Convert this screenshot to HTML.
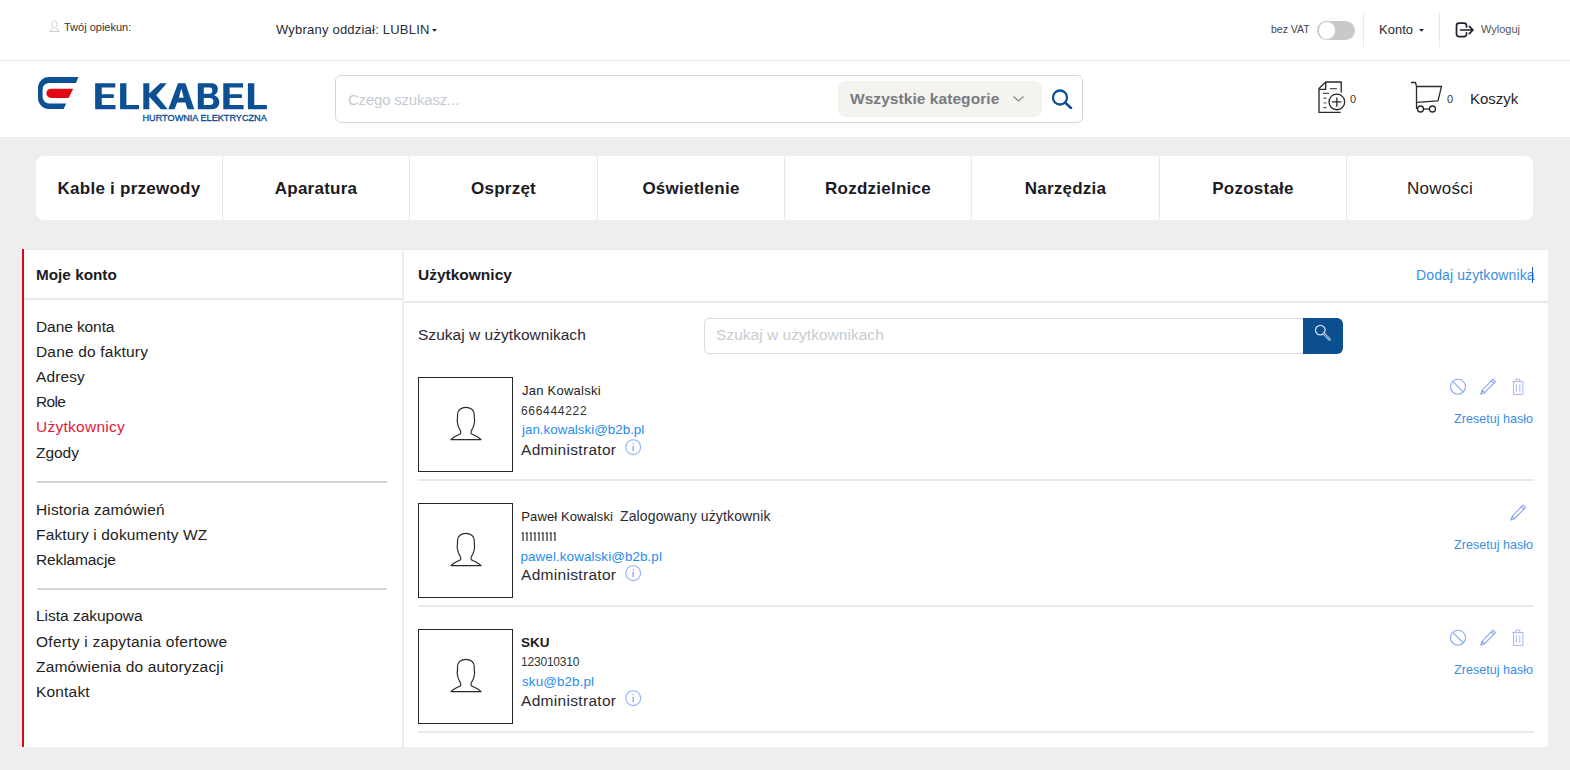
<!DOCTYPE html>
<html><head><meta charset="utf-8">
<style>
*{box-sizing:border-box;margin:0;padding:0}
html,body{width:1570px;height:770px;overflow:hidden;background:#eeeeee;font-family:"Liberation Sans",sans-serif;color:#212121}
.a{position:absolute;white-space:nowrap;line-height:1}
#top{position:absolute;left:0;top:0;width:1570px;height:61px;background:#fff;border-bottom:1px solid #e4e6ea}
#hdr{position:absolute;left:0;top:61px;width:1570px;height:76px;background:#fff}
#nav{position:absolute;left:36px;top:156px;width:1497px;height:64px;background:#fff;border-radius:8px}
#nav .it{position:absolute;top:0.5px;height:64px;font-size:17px;font-weight:700;color:#1b1b24;text-align:center;line-height:64px;letter-spacing:0.25px}
#side{position:absolute;left:22px;top:249px;width:380px;height:498px;background:#fff;border-left:2px solid #e30613;box-shadow:inset 0 1px 0 #e3e6ea}
#main{position:absolute;left:404px;top:249px;width:1144px;height:498px;background:#fff;box-shadow:inset 0 1px 0 #e3e6ea}
.sl{position:absolute;left:12px;font-size:15px;color:#222;line-height:1}
.hr{position:absolute;height:2px;background:#e5e8ed}
.blue{color:#2f8be6}
.m{position:absolute;white-space:nowrap;line-height:1}
</style></head><body>

<!-- TOP BAR -->
<div id="top">
  <svg class="a" style="left:49px;top:20px" width="11" height="12" viewBox="0 0 11 12"><path d="M5.5 1 C3.5 1 2.8 2.6 3 4.3 C3.1 5.6 3.8 6.6 4.3 7.3 L4.2 8.4 L1 10.6 L0.8 11.5 H10.2 L10 10.6 L6.8 8.4 L6.7 7.3 C7.2 6.6 7.9 5.6 8 4.3 C8.2 2.6 7.5 1 5.5 1Z" fill="none" stroke="#c9c9c9" stroke-width="0.9"/></svg>
  <div class="a" style="left:64px;top:22px;font-size:11px;color:#333">Twój opiekun:</div>
  <div class="a" style="left:276px;top:23px;font-size:13px;color:#2a2a33;letter-spacing:0.21px">Wybrany oddział: LUBLIN</div>
  <svg class="a" style="left:432px;top:28.5px" width="5" height="3" viewBox="0 0 5 3"><path d="M0 0 H5 L2.5 2.8Z" fill="#222"/></svg>

  <div class="a" style="left:1271px;top:24px;font-size:10.5px;color:#444">bez VAT</div>
  <div class="a" style="left:1317px;top:21px;width:38px;height:19px;border-radius:10px;background:#c9c9c9"></div>
  <div class="a" style="left:1318.8px;top:22.3px;width:16.5px;height:16.5px;border-radius:50%;background:#fff"></div>
  <div class="a" style="left:1363px;top:13px;width:1px;height:34px;background:#e6e8ee"></div>
  <div class="a" style="left:1379px;top:23px;font-size:13px;color:#2a2a33">Konto</div>
  <svg class="a" style="left:1419px;top:28.5px" width="5" height="3" viewBox="0 0 5 3"><path d="M0 0 H5 L2.5 2.8Z" fill="#222"/></svg>
  <div class="a" style="left:1439px;top:13px;width:1px;height:34px;background:#e6e8ee"></div>
  <svg class="a" style="left:1454px;top:21px" width="22" height="18" viewBox="0 0 22 18"><path d="M12.5,6 V4.7 A2.5,2.5 0 0 0 10,2.2 H5 A2.5,2.5 0 0 0 2.5,4.7 V13.2 A2.5,2.5 0 0 0 5,15.7 H10 A2.5,2.5 0 0 0 12.5,13.2 V11.8 M6.6,9 H18.6 M15.3,5.3 L19,9 L15.3,12.6" fill="none" stroke="#1f2030" stroke-width="1.7" stroke-linecap="round" stroke-linejoin="round"/></svg>
  <div class="a" style="left:1481px;top:24px;font-size:11px;color:#555">Wyloguj</div>
</div>

<!-- HEADER -->
<div id="hdr">
  <svg class="a" style="left:0;top:-61px" width="280" height="140" viewBox="0 0 280 140">
    <path d="M78.5,77 H49 A11,11 0 0 0 38,88 V98 A11,11 0 0 0 49,109 H63.6 L66.2,103.4 H49 A6.4,6.4 0 0 1 42.6,97 V89.3 A6.4,6.4 0 0 1 49,82.9 H75.9 Z" fill="#0c4f93"/>
    <path d="M73.2,88.7 H51 A4.65,4.65 0 0 0 46.4,93.35 A4.65,4.65 0 0 0 51,98 H68.6 Z" fill="#e30613"/>
    <path fill="#0c4f93" fill-rule="evenodd" d="M95.15,83.2 H115.3 V87.5 H101.75 V94.3 H113.8 V98.1 H101.75 V104.9 H115.5 V109.25 H95.15 Z
      M120.1,83.2 H126.4 V104.9 H139 V109.25 H120.1 Z
      M143.3,83.2 H149.3 V93.6 L160.2,83.2 H166.7 L156.3,95.3 L167.7,109.25 H160.8 L149.3,96.8 V109.25 H143.3 Z
      M168.3,109.25 L178,83.2 H185.4 L194.3,109.25 H187.6 L185.3,102.4 H177.2 L174.6,109.25 Z M178.9,97.8 H183.7 L181.3,88.5 Z
      M197.8,83.2 H211 C216,83.2 217.8,85.8 217.8,89.3 C217.8,92.3 216.3,94.3 214,95.2 C217.3,96 219.3,98.5 219.3,102 C219.3,106.5 216.5,109.25 211.5,109.25 H197.8 Z
      M203.8,87.5 V93.8 H209.5 C211.5,93.8 212.3,92.5 212.3,90.6 C212.3,88.7 211.5,87.5 209.5,87.5 Z
      M203.8,98.1 V105 H210 C212.3,105 213.4,103.7 213.4,101.5 C213.4,99.4 212.3,98.1 210,98.1 Z
      M223.3,83.2 H243.1 V87.5 H229.6 V94.3 H241.9 V98.1 H229.6 V104.9 H243.6 V109.25 H223.3 Z
      M247.9,83.2 H254.3 V104.9 H266.9 V109.25 H247.9 Z"/>
    <text x="142.5" y="121.2" font-family="Liberation Sans" font-weight="400" font-size="9.3" fill="#0c4f93" stroke="#0c4f93" stroke-width="0.35" textLength="124.3" lengthAdjust="spacingAndGlyphs">HURTOWNIA ELEKTRYCZNA</text>
  </svg>
  <div class="a" style="left:335px;top:14px;width:748px;height:48px;border:1.5px solid #d3d8df;border-radius:6px"></div>
  <div class="a" style="left:348px;top:31px;font-size:15px;color:#c5cad2;letter-spacing:-0.21px">Czego szukasz...</div>
  <div class="a" style="left:838px;top:20px;width:204px;height:36px;background:#f4f3f0;border-radius:7px"></div>
  <div class="a" style="left:850px;top:29.78px;font-size:15.5px;font-weight:700;color:#777b80;letter-spacing:0.06px">Wszystkie kategorie</div>
  <svg class="a" style="left:1012px;top:34px" width="13" height="8" viewBox="0 0 13 8"><path d="M1.5 1.5 L6.5 6 L11.5 1.5" fill="none" stroke="#8a8a8a" stroke-width="1.3"/></svg>
  <svg class="a" style="left:1051px;top:28px" width="22" height="20" viewBox="0 0 22 20"><circle cx="9" cy="8.5" r="7" fill="none" stroke="#0c4f93" stroke-width="2.3"/><path d="M14 13.5 L20 19" stroke="#0c4f93" stroke-width="2.5" stroke-linecap="round"/></svg>

  <!-- quote icon -->
  <svg class="a" style="left:1316px;top:19px" width="34" height="36" viewBox="0 0 34 36">
    <path d="M9.7,2 H25.2 V12.5 M3,8.4 L9.7,2 V9.3 H3 M3,8.4 V32.4 H24.6" fill="none" stroke="#2a2a2a" stroke-width="1.35" stroke-linejoin="round"/>
    <path d="M13.8,8.6 H20.9 M7,13.4 H13 M7.4,18.1 H10.6 M7.4,23 H10.6 M7.4,27.7 H10.6" stroke="#555" stroke-width="1.2"/>
    <circle cx="20.85" cy="21.9" r="7.8" fill="#fff" stroke="#2a2a2a" stroke-width="1.35"/>
    <path d="M20.85,17.5 V26.85 M15.9,21.9 H25.5" stroke="#2a2a2a" stroke-width="1.3"/>
  </svg>
  <div class="a" style="left:1350px;top:33px;font-size:11px;color:#333">0</div>
  <!-- cart -->
  <svg class="a" style="left:1410px;top:20px" width="34" height="33" viewBox="0 0 34 33">
    <path d="M1 1.5 H5.5 L6.5 5.5 V28 M6.5 5.5 H31.5 L28 20 L7 21.3" fill="none" stroke="#2a2a2a" stroke-width="1.3"/>
    <circle cx="10.5" cy="28" r="3" fill="#fff" stroke="#2a2a2a" stroke-width="1.3"/>
    <circle cx="22.5" cy="28" r="3" fill="#fff" stroke="#2a2a2a" stroke-width="1.3"/>
    <path d="M13.5 28 H19.5" stroke="#2a2a2a" stroke-width="1.3"/>
  </svg>
  <div class="a" style="left:1447px;top:33px;font-size:11px;color:#333">0</div>
  <div class="a" style="left:1470px;top:30px;font-size:15px;color:#1f1f2a">Koszyk</div>
</div>

<!-- NAV -->
<div id="nav">
  <div class="it" style="left:0px;width:186px">Kable i przewody</div>
  <div class="it" style="left:187px;width:186px">Aparatura</div>
  <div class="it" style="left:374px;width:187px">Osprzęt</div>
  <div class="it" style="left:562px;width:186px">Oświetlenie</div>
  <div class="it" style="left:749px;width:186px">Rozdzielnice</div>
  <div class="it" style="left:936px;width:187px">Narzędzia</div>
  <div class="it" style="left:1124px;width:186px">Pozostałe</div>
  <div class="it" style="left:1311px;width:186px;font-weight:400">Nowości</div>
  <div style="position:absolute;left:186px;top:0;width:1px;height:64px;background:#e9e9e9"></div>
  <div style="position:absolute;left:373px;top:0;width:1px;height:64px;background:#e9e9e9"></div>
  <div style="position:absolute;left:561px;top:0;width:1px;height:64px;background:#e9e9e9"></div>
  <div style="position:absolute;left:748px;top:0;width:1px;height:64px;background:#e9e9e9"></div>
  <div style="position:absolute;left:935px;top:0;width:1px;height:64px;background:#e9e9e9"></div>
  <div style="position:absolute;left:1123px;top:0;width:1px;height:64px;background:#e9e9e9"></div>
  <div style="position:absolute;left:1310px;top:0;width:1px;height:64px;background:#e9e9e9"></div>
</div>

<!-- SIDEBAR -->
<div id="side">
  <div class="sl" style="top:17.55px;font-size:15.3px;letter-spacing:0.01px;font-weight:700;color:#1b1b24">Moje konto</div>
  <div class="hr" style="left:0;top:49px;width:378px"></div>
  <div class="sl" style="top:69.68px;font-size:15.5px;letter-spacing:-0.09px">Dane konta</div>
  <div class="sl" style="top:94.88px;font-size:15.5px;letter-spacing:0.18px">Dane do faktury</div>
  <div class="sl" style="top:120.08px;font-size:15.5px;letter-spacing:0.12px">Adresy</div>
  <div class="sl" style="top:145.28px;font-size:15.5px;letter-spacing:-0.7px">Role</div>
  <div class="sl" style="top:170.48px;font-size:15.5px;letter-spacing:0.26px;color:#e3173a">Użytkownicy</div>
  <div class="sl" style="top:195.68px;font-size:15.5px;letter-spacing:-0.03px">Zgody</div>
  <div class="hr" style="left:13px;top:232px;width:350px;height:2px;background:#d4d4d4"></div>
  <div class="sl" style="top:252.78px;font-size:15.5px;letter-spacing:0.12px">Historia zamówień</div>
  <div class="sl" style="top:277.98px;font-size:15.5px;letter-spacing:0.16px">Faktury i dokumenty WZ</div>
  <div class="sl" style="top:303.18px;font-size:15.5px;letter-spacing:-0.12px">Reklamacje</div>
  <div class="hr" style="left:13px;top:339px;width:350px;height:2px;background:#d4d4d4"></div>
  <div class="sl" style="top:359.48px;font-size:15.5px;letter-spacing:-0.02px">Lista zakupowa</div>
  <div class="sl" style="top:384.68px;font-size:15.5px;letter-spacing:0.26px">Oferty i zapytania ofertowe</div>
  <div class="sl" style="top:409.88px;font-size:15.5px;letter-spacing:0.16px">Zamówienia do autoryzacji</div>
  <div class="sl" style="top:435.08px;font-size:15.5px;letter-spacing:0.18px">Kontakt</div>
</div>

<!-- MAIN -->
<div id="main">
  <div class="m" style="left:14px;top:18.48px;font-size:15.5px;font-weight:700;color:#1b1b24">Użytkownicy</div>
  <div class="m blue" style="left:1012px;top:18.5px;font-size:14px;color:#3a8ee6;letter-spacing:0.12px">Dodaj użytkownika</div>
  <div class="m" style="left:1128px;top:17.5px;width:1px;height:16px;background:#1a5fd0"></div>
  <div class="hr" style="left:0;top:52px;width:1144px"></div>
  <div class="m" style="left:14px;top:77.78px;font-size:15.5px;color:#2a2a33;letter-spacing:0.03px">Szukaj w użytkownikach</div>
  <div class="m" style="left:300px;top:69px;width:603px;height:36px;border:1.5px solid #d6dbe2;border-radius:5px 0 0 5px"></div>
  <div class="m" style="left:312px;top:78.38px;font-size:15.5px;color:#c7ccd3;letter-spacing:0.03px">Szukaj w użytkownikach</div>
  <div class="m" style="left:899px;top:69px;width:40px;height:36px;background:#0b4f8f;border-radius:0 6px 6px 0"></div>
  <svg class="m" style="left:909px;top:75px" width="20" height="20" viewBox="0 0 20 20"><circle cx="7.3" cy="6.1" r="4.8" fill="none" stroke="#cfdceb" stroke-width="1.3"/><path d="M10.8 9.6 L16.5 15.3" stroke="#cfdceb" stroke-width="2.6" stroke-linecap="round"/><path d="M10.8 9.6 L16.5 15.3" stroke="#0b4f8f" stroke-width="1" stroke-linecap="round"/></svg>

  <!-- row 1 -->
  <div class="m" style="left:14px;top:128px;width:95px;height:95px;border:1.6px solid #262626"></div>
  <svg class="m" style="left:36px;top:151px" width="50" height="45" viewBox="0 0 50 45"><path d="M11,39.6 C13,37 18,35.2 20.5,33.8 C21,32.8 20.8,31.3 20.2,30.3 C18.5,27.8 17.5,25 17.3,22 C17,21 17.3,19.5 17.5,18 L17.55,14.2 A8.35,6.9 0 0 1 34.25,14.2 L34.3,18 C34.5,19.5 34.8,21 34.5,22 C34.3,25 33.3,27.8 31.6,30.3 C31,31.3 30.8,32.8 31.3,33.8 C33.8,35.2 38.8,37 41,39.6 Z" fill="none" stroke="#2b2b2b" stroke-width="1.2" stroke-linejoin="round"/></svg>
  <div class="m" style="left:118px;top:135px;font-size:13px;color:#222;letter-spacing:0.25px">Jan Kowalski</div>
  <div class="m" style="left:117px;top:155.8px;font-size:12px;color:#333;letter-spacing:0.7px">666444222</div>
  <div class="m" style="left:118px;top:174.2px;font-size:13.4px;color:#1f8cf0">jan.kowalski@b2b.pl</div>
  <div class="m" style="left:117px;top:192.98px;font-size:15.5px;color:#2a2a33;letter-spacing:0.31px">Administrator</div>
  <svg class="m" style="left:221px;top:190px" width="17" height="17" viewBox="0 0 17 17"><circle cx="8.2" cy="8.2" r="7.4" fill="none" stroke="#8fb0f4" stroke-width="1.1"/><path d="M8.2 6.8 V12" stroke="#8fb0f4" stroke-width="1.5"/><path d="M8.2 4.1 V5.6" stroke="#aac2f6" stroke-width="1.5"/></svg>
  <div class="hr" style="left:14px;top:230px;width:1116px;background:#e8e9ed"></div>
  <svg class="m" style="left:1045px;top:128.8px" width="18" height="18" viewBox="0 0 18 18"><circle cx="9" cy="8.7" r="7.5" fill="none" stroke="#8eaaf3" stroke-width="1.1"/><path d="M3.7 3.4 L14.3 14" stroke="#8eaaf3" stroke-width="1.1"/></svg>
  <svg class="m" style="left:1076px;top:127.8px" width="18" height="19" viewBox="0 -1 18 19"><path transform="translate(0.8,16.1) scale(0.92) translate(-0.8,-16.1)" d="M0.8,16.1 L2.24,11.92 L14.04,-0.13 L16.76,2.53 L4.96,14.58 Z M2.24,11.92 L4.96,14.58 M12.29,1.65 L15.01,4.31" fill="none" stroke="#7e9ef0" stroke-width="1.1" stroke-linejoin="round"/></svg>
  <svg class="m" style="left:1108px;top:128.8px" width="13" height="18" viewBox="0 0 13 18"><path d="M1.5,4.1 V16.4 H10.9 V4.1 M0.3,3.6 H11.5 M3.8,3.6 V1.2 H7.8 V3.6 M4.3,6.3 V13.7 M7.8,6.3 V13.7" fill="none" stroke="#a9b6f2" stroke-width="1"/></svg>
  <div class="m" style="left:1050px;top:163.7px;font-size:12.6px;color:#3a8ee6">Zresetuj hasło</div>
  <!-- row 2 -->
  <div class="m" style="left:14px;top:254px;width:95px;height:95px;border:1.6px solid #262626"></div>
  <svg class="m" style="left:36px;top:277px" width="50" height="45" viewBox="0 0 50 45"><path d="M11,39.6 C13,37 18,35.2 20.5,33.8 C21,32.8 20.8,31.3 20.2,30.3 C18.5,27.8 17.5,25 17.3,22 C17,21 17.3,19.5 17.5,18 L17.55,14.2 A8.35,6.9 0 0 1 34.25,14.2 L34.3,18 C34.5,19.5 34.8,21 34.5,22 C34.3,25 33.3,27.8 31.6,30.3 C31,31.3 30.8,32.8 31.3,33.8 C33.8,35.2 38.8,37 41,39.6 Z" fill="none" stroke="#2b2b2b" stroke-width="1.2" stroke-linejoin="round"/></svg>
  <div class="m" style="left:117.3px;top:261px;font-size:13px;color:#222;letter-spacing:0.1px">Paweł Kowalski</div>
  <div class="m" style="left:216px;top:260px;font-size:14px;color:#2a2a33;letter-spacing:0.13px">Zalogowany użytkownik</div>
  <svg class="m" style="left:0;top:0" width="200" height="300"><path d="M119.0,283.2 V292.0 M117.7,284.6 L119.0,283.4 M123.0,283.2 V292.0 M121.7,284.6 L123.0,283.4 M127.0,283.2 V292.0 M125.7,284.6 L127.0,283.4 M131.0,283.2 V292.0 M129.7,284.6 L131.0,283.4 M135.0,283.2 V292.0 M133.7,284.6 L135.0,283.4 M139.0,283.2 V292.0 M137.7,284.6 L139.0,283.4 M143.0,283.2 V292.0 M141.7,284.6 L143.0,283.4 M147.0,283.2 V292.0 M145.7,284.6 L147.0,283.4 M151.0,283.2 V292.0 M149.7,284.6 L151.0,283.4" fill="none" stroke="#333" stroke-width="1.25"/></svg>
  <div class="m" style="left:116.5px;top:300.6px;font-size:13.4px;color:#1f8cf0;letter-spacing:0.1px">pawel.kowalski@b2b.pl</div>
  <div class="m" style="left:117px;top:318.48px;font-size:15.5px;color:#2a2a33;letter-spacing:0.31px">Administrator</div>
  <svg class="m" style="left:221px;top:316px" width="17" height="17" viewBox="0 0 17 17"><circle cx="8.2" cy="8.2" r="7.4" fill="none" stroke="#8fb0f4" stroke-width="1.1"/><path d="M8.2 6.8 V12" stroke="#8fb0f4" stroke-width="1.5"/><path d="M8.2 4.1 V5.6" stroke="#aac2f6" stroke-width="1.5"/></svg>
  <div class="hr" style="left:14px;top:356px;width:1116px;background:#e8e9ed"></div>
  <svg class="m" style="left:1106px;top:253.8px" width="18" height="19" viewBox="0 -1 18 19"><path transform="translate(0.8,16.1) scale(0.92) translate(-0.8,-16.1)" d="M0.8,16.1 L2.24,11.92 L14.04,-0.13 L16.76,2.53 L4.96,14.58 Z M2.24,11.92 L4.96,14.58 M12.29,1.65 L15.01,4.31" fill="none" stroke="#7e9ef0" stroke-width="1.1" stroke-linejoin="round"/></svg>
  <div class="m" style="left:1050px;top:289.7px;font-size:12.6px;color:#3a8ee6">Zresetuj hasło</div>
  <!-- row 3 -->
  <div class="m" style="left:14px;top:380px;width:95px;height:95px;border:1.6px solid #262626"></div>
  <svg class="m" style="left:36px;top:403px" width="50" height="45" viewBox="0 0 50 45"><path d="M11,39.6 C13,37 18,35.2 20.5,33.8 C21,32.8 20.8,31.3 20.2,30.3 C18.5,27.8 17.5,25 17.3,22 C17,21 17.3,19.5 17.5,18 L17.55,14.2 A8.35,6.9 0 0 1 34.25,14.2 L34.3,18 C34.5,19.5 34.8,21 34.5,22 C34.3,25 33.3,27.8 31.6,30.3 C31,31.3 30.8,32.8 31.3,33.8 C33.8,35.2 38.8,37 41,39.6 Z" fill="none" stroke="#2b2b2b" stroke-width="1.2" stroke-linejoin="round"/></svg>
  <div class="m" style="left:117px;top:386.6px;font-size:13.5px;font-weight:700;color:#1b1b24">SKU</div>
  <div class="m" style="left:117px;top:406.8px;font-size:12px;color:#333;letter-spacing:-0.2px">123010310</div>
  <div class="m" style="left:118px;top:426px;font-size:13.4px;color:#1f8cf0;letter-spacing:0.13px">sku@b2b.pl</div>
  <div class="m" style="left:117px;top:444.18px;font-size:15.5px;color:#2a2a33;letter-spacing:0.31px">Administrator</div>
  <svg class="m" style="left:221px;top:441px" width="17" height="17" viewBox="0 0 17 17"><circle cx="8.2" cy="8.2" r="7.4" fill="none" stroke="#8fb0f4" stroke-width="1.1"/><path d="M8.2 6.8 V12" stroke="#8fb0f4" stroke-width="1.5"/><path d="M8.2 4.1 V5.6" stroke="#aac2f6" stroke-width="1.5"/></svg>
  <div class="hr" style="left:14px;top:482px;width:1116px;background:#e8e9ed"></div>
  <svg class="m" style="left:1045px;top:379.8px" width="18" height="18" viewBox="0 0 18 18"><circle cx="9" cy="8.7" r="7.5" fill="none" stroke="#8eaaf3" stroke-width="1.1"/><path d="M3.7 3.4 L14.3 14" stroke="#8eaaf3" stroke-width="1.1"/></svg>
  <svg class="m" style="left:1076px;top:378.8px" width="18" height="19" viewBox="0 -1 18 19"><path transform="translate(0.8,16.1) scale(0.92) translate(-0.8,-16.1)" d="M0.8,16.1 L2.24,11.92 L14.04,-0.13 L16.76,2.53 L4.96,14.58 Z M2.24,11.92 L4.96,14.58 M12.29,1.65 L15.01,4.31" fill="none" stroke="#7e9ef0" stroke-width="1.1" stroke-linejoin="round"/></svg>
  <svg class="m" style="left:1108px;top:379.8px" width="13" height="18" viewBox="0 0 13 18"><path d="M1.5,4.1 V16.4 H10.9 V4.1 M0.3,3.6 H11.5 M3.8,3.6 V1.2 H7.8 V3.6 M4.3,6.3 V13.7 M7.8,6.3 V13.7" fill="none" stroke="#a9b6f2" stroke-width="1"/></svg>
  <div class="m" style="left:1050px;top:414.7px;font-size:12.6px;color:#3a8ee6">Zresetuj hasło</div>
</div>

</body></html>
